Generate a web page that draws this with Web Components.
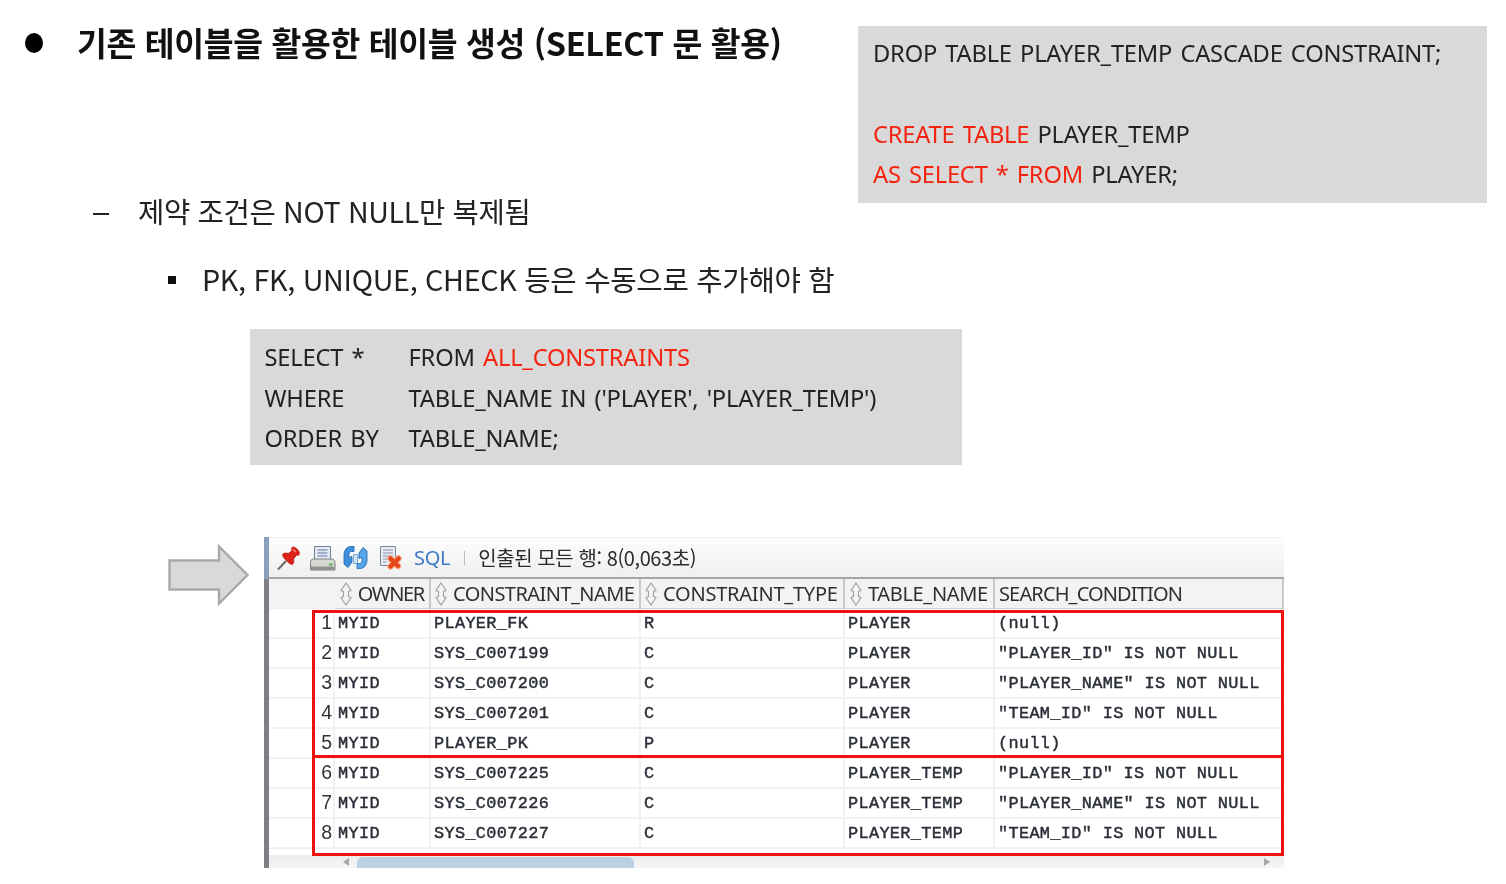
<!DOCTYPE html>
<html lang="ko">
<head>
<meta charset="utf-8">
<title>slide</title>
<style>
html,body{margin:0;padding:0;background:#fff}
body{font-family:"Noto Sans CJK KR","Noto Sans",sans-serif;color:#1c1c1c}
</style>
</head>
<body>
<slide-page>
  <div slot="left">
    <bullet-line level="1">기존 테이블을 활용한 테이블 생성 (SELECT 문 활용)</bullet-line>
    <bullet-line level="2">제약 조건은 NOT NULL만 복제됨</bullet-line>
  </div>
  <sql-box slot="right" kind="top"></sql-box>
  <bullet-line slot="sub" level="3">PK, FK, UNIQUE, CHECK 등은 수동으로 추가해야 함</bullet-line>
  <sql-box slot="sub" kind="mid"></sql-box>
  <result-section slot="sub"></result-section>
</slide-page>
<script>
const FONT='"Noto Sans CJK KR","Noto Sans",sans-serif';
class SlidePage extends HTMLElement{
  constructor(){super();this.attachShadow({mode:'open'}).innerHTML=`<style>
  :host{display:block;width:1506px;height:884px;overflow:hidden;background:#fff;box-sizing:border-box;padding-top:26px;filter:blur(.35px)}
  .top{display:flex;align-items:flex-start;height:177px}
  .left{width:858px;flex:none}
  .sub{display:block}
  </style>
  <div class="top"><div class="left"><slot name="left"></slot></div><slot name="right"></slot></div>
  <div class="sub"><slot name="sub"></slot></div>`;}
}
class BulletLine extends HTMLElement{
  constructor(){super();const l=this.getAttribute('level');
  const r=this.attachShadow({mode:'open'});
  const cfg={
   1:`:host{display:flex;align-items:center;height:36px;padding-left:25px;margin-bottom:132px;margin-top:-1px;font:700 32.4px/36px ${FONT};color:#111;letter-spacing:-.3px}
      .m{width:18px;height:20px;border-radius:50%;background:#000;margin-right:34px;flex:none}
      .t{margin-top:-2px}`,
   2:`:host{display:flex;align-items:center;height:36px;padding-left:93px;font:400 28.6px/36px ${FONT};color:#222;letter-spacing:-.35px}
      .m{width:16px;height:2px;background:#222;margin:6px 29px 0 0;flex:none}`,
   3:`:host{display:flex;align-items:center;height:36px;padding-left:168px;margin-top:59px;margin-bottom:31px;font:400 28.7px/36px ${FONT};color:#222;letter-spacing:-.3px}
      .m{width:8px;height:8px;background:#111;margin-right:26px;flex:none}
      .t{margin-top:-3px}`}[l];
  r.innerHTML=`<style>${cfg}</style><span class="m"></span><span class="t"><slot></slot></span>`;}
}
class SqlBox extends HTMLElement{
  constructor(){super();const k=this.getAttribute('kind');const r=this.attachShadow({mode:'open'});
  const red=s=>`<span class="r">${s}</span>`;
  if(k==='top'){
   r.innerHTML=`<style>
   :host{display:block;width:629px;height:177px;box-sizing:border-box;background:#d9d9d9;padding:7px 15px;font:400 23.7px/40.3px "Noto Sans",sans-serif;color:#222;word-spacing:2.2px;white-space:pre;letter-spacing:-.2px}
   .r{color:#f4230f}</style><div>DROP TABLE PLAYER_TEMP CASCADE CONSTRAINT;</div><div>&nbsp;</div><div>${red('CREATE TABLE')} PLAYER_TEMP</div><div>${red('AS SELECT * FROM')} PLAYER;</div>`;
  }else{
   r.innerHTML=`<style>
   :host{display:grid;grid-template-columns:144px 1fr;width:712px;height:136px;box-sizing:border-box;margin-left:250px;background:#d9d9d9;padding:8px 14.5px;font:400 23.7px/40.5px "Noto Sans",sans-serif;color:#222;white-space:pre;word-spacing:2.3px;letter-spacing:-.2px}
   .r{color:#f4230f}</style><div>SELECT *</div><div>FROM ${red('ALL_CONSTRAINTS')}</div><div>WHERE</div><div>TABLE_NAME IN ('PLAYER', 'PLAYER_TEMP')</div><div>ORDER BY</div><div>TABLE_NAME;</div>`;
  }}
}
class ResultSection extends HTMLElement{
  constructor(){super();this.attachShadow({mode:'open'}).innerHTML=`<style>
  :host{display:flex;align-items:flex-start;margin-top:72px;padding-left:168px}
  svg{width:82px;height:64px;flex:none;margin-top:7px;margin-right:14px;display:block}
  </style>
  <svg viewBox="0 0 82 64"><path d="M1.500 16.500H51V2.500L79.500 31 51 59.500V45.500H1.500Z" fill="#d9d9d9" stroke="#a9a9a9" stroke-width="2.400"/></svg>
  <result-grid></result-grid>`;}
}
class GridToolbar extends HTMLElement{
  constructor(){super();this.attachShadow({mode:'open'}).innerHTML=`<style>
  :host{display:flex;align-items:center;height:41px;box-sizing:border-box;background:linear-gradient(#fdfdfd,#efefef);border-bottom:2px solid #a6a6a6;padding-left:6px;font:400 20px/1 ${FONT};color:#2b2b2b;letter-spacing:-.42px}
  svg{width:26px;height:26px;display:block;flex:none;overflow:visible}
  .i{margin-right:7.500px}
  .sql{color:#3e78c8;font-family:"Noto Sans",sans-serif;letter-spacing:-.3px;margin-left:5px}
  .sep{width:1px;height:14px;background:#bbb;margin:0 13.500px 0 13.500px}
  </style>
  <svg class="i" viewBox="0 0 26 26">
    <path d="M11 16 3 24.500" stroke="#6b6b6b" stroke-width="2" fill="none"/>
    <path d="M17.500 2c2.500-.500 7 3.500 7 6.500 0 1.500-1.500 2.200-3 1.800l-3 3.700c.8 2.500.2 5-1.500 5.500-2.500-.2-8.500-6-9.500-9.500.2-1.800 3.200-2.500 5.800-1.500l3.700-3c-.7-1.500-.5-3 .5-3.500Z" fill="#e0201a" stroke="#a81410" stroke-width=".7"/>
    <path d="M18 4.500l3 2.500" stroke="#f58a80" stroke-width="1.400"/>
  </svg>
  <svg class="i" viewBox="0 0 26 26">
    <path d="M5.500 1.500h16v13h-16Z" fill="#e4e9f3" stroke="#6c7f9b"/>
    <path d="M8.500 5h10M8.500 8h10M8.500 11h10" stroke="#8a9dbd" stroke-width="1.300"/>
    <path d="M4 14h19c1.800 0 3 1.500 3 3.500V25H1.500v-7.500C1.500 15.500 2.500 14 4 14Z" fill="#d6d6d2" stroke="#7f8182"/>
    <path d="M2 21.500h23.500V25H2Z" fill="#8f9193"/>
    <rect x="20" y="18.500" width="3.500" height="2" fill="#58b04e"/>
  </svg>
  <svg class="i" viewBox="0 0 26 26">
    <path d="M12 1.500v5H9.500C7.800 6.500 7 8 7 9.500v3l3-1v5.500L6 22.500 2 19V10C2 5 5 1.500 9 1.500Z" fill="#3f90dc" stroke="#1c62ad" stroke-width=".8"/>
    <path d="M15 23.500v-5h2.500c1.700 0 2.500-1.500 2.500-3v-3l-3 1V8l4-5.500 4 3.500v9c0 5-3 8.500-7 8.500Z" fill="#57a5e6" stroke="#1c62ad" stroke-width=".8"/>
    <path d="M11.500 9.500h4v9h-4Z" fill="#cfe3f6" stroke="#4f8fcf" stroke-width=".7"/>
  </svg>
  <svg class="i" viewBox="0 0 26 26">
    <path d="M4.500 1.500h15v19h-15Z" fill="#e9ecf3" stroke="#7b8494"/>
    <path d="M7 5h10M7 8h10M7 11h10M7 14h5M7 17h3" stroke="#7f8ea8" stroke-width="1.200"/>
    <path d="M12.500 13.500l7.500 7.500M20.500 13.500l-8 8" stroke="#ffb08a" stroke-width="6.500" stroke-linecap="round" transform="translate(2 0)"/>
    <path d="M12.500 13.500l7.500 7.500M20.500 13.500l-8 8" stroke="#e5471a" stroke-width="4.500" stroke-linecap="round" transform="translate(2 0)"/>
  </svg>
  <span class="sql">SQL</span><span class="sep"></span><span>인출된 모든 행: 8(0,063초)</span>`;}
}
class ResultGrid extends HTMLElement{
  constructor(){super();
  const rows=[
   ['MYID','PLAYER_FK','R','PLAYER','(null)'],
   ['MYID','SYS_C007199','C','PLAYER','"PLAYER_ID" IS NOT NULL'],
   ['MYID','SYS_C007200','C','PLAYER','"PLAYER_NAME" IS NOT NULL'],
   ['MYID','SYS_C007201','C','PLAYER','"TEAM_ID" IS NOT NULL'],
   ['MYID','PLAYER_PK','P','PLAYER','(null)'],
   ['MYID','SYS_C007225','C','PLAYER_TEMP','"PLAYER_ID" IS NOT NULL'],
   ['MYID','SYS_C007226','C','PLAYER_TEMP','"PLAYER_NAME" IS NOT NULL'],
   ['MYID','SYS_C007227','C','PLAYER_TEMP','"TEAM_ID" IS NOT NULL']];
  const arrows=`<svg class="s" viewBox="0 0 14 24"><path d="M7 1l5 7.500-2.500 1v5l2.500 1L7 23l-5-7.500 2.500-1v-5L2 8.500Z" fill="#f4f4f4" stroke="#a3a3a3" stroke-width="1.200"/></svg>`;
  const hd=[['OWNER','-1.300px',3],['CONSTRAINT_NAME','-.55px',3],['CONSTRAINT_TYPE','-.22px',3],['TABLE_NAME','-.35px',4],['SEARCH_CONDITION','-.86px',4]];
  const head=`<div class="h n"></div>`+hd.map(([t,ls,p],i)=>`<div class="h" style="padding-left:${p}px">${i<4?arrows:''}<span style="letter-spacing:${ls}">${t}</span></div>`).join('');
  const body=rows.map((r,i)=>`<div class="c num">${i+1}</div>`+r.map(t=>`<div class="c">${t}</div>`).join('')).join('');
  this.attachShadow({mode:'open'}).innerHTML=`<style>
  :host{display:block;position:relative;width:1020px;height:331px;box-sizing:border-box;border-left:5px solid #7d7f84;background:#fff;border-top:1px solid #eee}
  .blue{position:absolute;left:-5px;top:-1px;width:5px;height:42px;background:#8aa0bd}
  .g{display:grid;grid-template-columns:66px 96px 210px 204px 150px 1fr;grid-auto-rows:30px}
  .h{height:29px;background:#f3f3f3;border-right:2px solid #c9c9c9;border-bottom:1px solid #cfcfcf;display:flex;align-items:center;justify-content:flex-start;font:400 20px/1 "Noto Sans",sans-serif;color:#2f2f2f;box-sizing:content-box;white-space:nowrap;overflow:hidden}
  .h.n{border-right:0;border-bottom-color:#eee;padding:0}
  .h:nth-child(2){justify-content:flex-end;padding:0 5px 0 0 !important}
  .h:last-child{border-right:0}
  .s{width:14px;height:24px;margin-right:5px;flex:none}
  .c{border-bottom:2px solid #f1f1f1;border-right:2px solid #f1f1f1;display:flex;align-items:center;padding:3px 0 0 3px;box-sizing:border-box;font:400 16.900px/1 "Liberation Mono",monospace;color:#2b2f38;letter-spacing:.33px;white-space:pre;-webkit-text-stroke:.45px #2b2f38}
  .c:nth-child(6n){border-right:0}
  .num{justify-content:flex-end;padding:0 1px 0 0;font:400 19.500px/1 "Liberation Sans",sans-serif;color:#333;letter-spacing:0;-webkit-text-stroke:0}
  .bar{position:absolute;left:0;right:0;bottom:0;height:13px;background:linear-gradient(#ececec,#f6f6f6)}
  .thumb{position:absolute;left:88px;width:277px;top:2px;height:11px;background:#bcd0e4;border-radius:6px 6px 0 0}
  .la,.ra{position:absolute;top:3px;width:0;height:0;border:4px solid transparent}
  .la{left:74px;border-right:6px solid #a8a8a8;border-left:0}
  .ra{right:14px;border-left:6px solid #a8a8a8;border-right:0}
  .red{position:absolute;border:3px solid #f01010;box-sizing:border-box;left:43px;width:972px;pointer-events:none}
  </style>
  <i class="blue"></i>
  <grid-toolbar></grid-toolbar>
  <div class="g">${head}${body}</div>
  <div class="bar"><i class="la"></i><i class="thumb"></i><i class="ra"></i></div>
  <div class="red" style="top:72px;height:148px"></div>
  <div class="red" style="top:217px;height:101px"></div>`;}
}
customElements.define('slide-page',SlidePage);
customElements.define('bullet-line',BulletLine);
customElements.define('sql-box',SqlBox);
customElements.define('grid-toolbar',GridToolbar);
customElements.define('result-grid',ResultGrid);
customElements.define('result-section',ResultSection);
</script>
</body>
</html>
